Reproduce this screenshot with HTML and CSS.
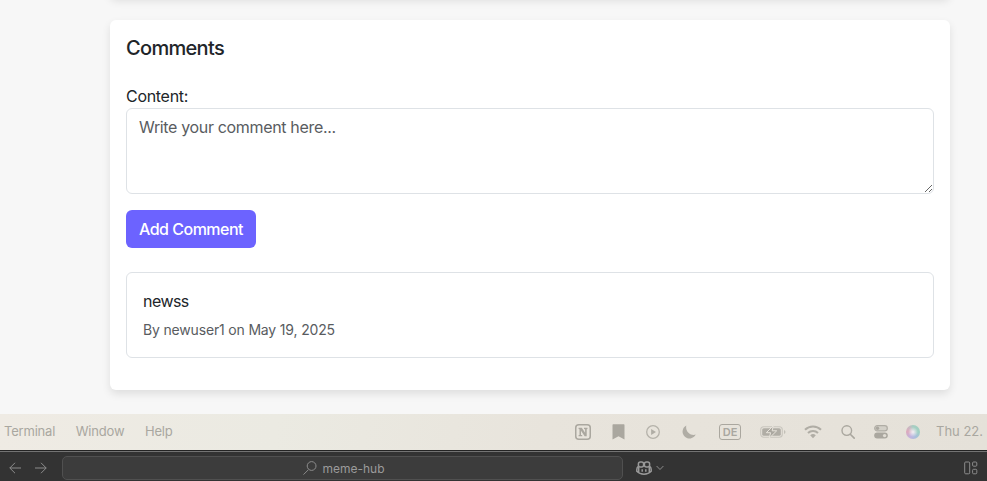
FILE: index.html
```html
<!DOCTYPE html>
<html lang="en">
<head>
<meta charset="utf-8">
<title>Comments</title>
<link rel="stylesheet" href="styles.css">
</head>
<body>
<main class="page">
  <section class="card previous"></section>
  <section class="card comments">
    <h2 class="title">Comments</h2>
    <form class="form">
      <label class="label" for="content">Content:</label>
      <textarea class="field" id="content" placeholder="Write your comment here..."></textarea>
      <button class="submit" type="button"><span>Add Comment</span></button>
    </form>
    <article class="comment">
      <p class="text"><span>newss</span></p>
      <p class="meta"><span>By newuser1 on May 19, 2025</span></p>
    </article>
  </section>
</main>
<div class="menubar">
  <nav class="menus"><span>Terminal</span><span>Window</span><span>Help</span></nav>
  <div class="status">
    <svg width="16" height="16" viewBox="0 0 16 16"><rect x=".75" y=".75" width="14.5" height="14.5" rx="3" fill="none" stroke="#aaa79f" stroke-width="1.5"/><path d="M3.6 3.8h3.2l3.3 4.9V5.200L9 4.900V3.800h3.500v1.100l-.8.300V12.200H9.700L6 6.800v4.100l1.200.2v1.100H3.600v-1.100l.9-.2V5.200L3.600 4.900z" fill="#aaa79f"/></svg>
    <svg class="bookmark" width="13" height="16" viewBox="0 0 13 16"><path d="M.5 1Q.5.300 1.200.300h10.600q.7 0 .7.700v14.500l-6-3.200-6 3.200z" fill="#aaa79f"/></svg>
    <svg class="play" width="14" height="14" viewBox="0 0 14 14"><circle cx="7" cy="7" r="6.3" fill="none" stroke="#b5b2aa" stroke-width="1.3"/><path d="M5.100 4.100v5.800L10 7z" fill="#b0ada5"/></svg>
    <svg class="moon" width="14" height="14" viewBox="0 0 14 14"><path d="M4.300.5A6.900 6.900 0 1 0 13.700 9.600C9 11.200 3 6.800 4.300.5z" fill="#b0ada5"/></svg>
    <span class="lang">DE</span>
    <svg class="battery" width="26" height="14" viewBox="0 0 26 14"><rect x=".7" y="1.700" width="21.600" height="10.600" rx="3" fill="none" stroke="#c9c6be" stroke-width="1.100"/><rect x="2.200" y="3.200" width="18.600" height="7.600" rx="1.600" fill="#b0ada5"/><path d="M24 5v4q1.500-.4 1.500-2T24 5z" fill="#c3c0b8"/><path d="M13.200.8 6.300 7.700h4.300L9.200 13.200l7.500-7.400h-4.500z" fill="#aaa79f" stroke="#e7e3db" stroke-width="1"/></svg>
    <svg class="wifi" width="18" height="14" viewBox="0 0 18 14"><g fill="none" stroke="#b0ada5" stroke-width="2"><path d="M1 4.800a11.400 11.400 0 0 1 16 0"/><path d="M4 8a7.100 7.100 0 0 1 10 0"/></g><path d="M6.200 10.300a4.200 4.200 0 0 1 5.600 0L9 13.200z" fill="#b0ada5"/></svg>
    <svg class="find" width="14" height="14" viewBox="0 0 14 14"><circle cx="5.800" cy="5.600" r="4.800" fill="none" stroke="#aaa79f" stroke-width="1.400"/><path d="m9.300 9.200 3.900 3.900" stroke="#aaa79f" stroke-width="1.600" stroke-linecap="round"/></svg>
    <svg class="control" width="14" height="14" viewBox="0 0 14 14"><rect x=".7" y=".7" width="12.600" height="5.200" rx="2.600" fill="#d3d0c8" stroke="#b0ada5" stroke-width="1.200"/><circle cx="3.500" cy="3.300" r="1.700" fill="#aaa79f"/><rect x=".2" y="7.600" width="13.600" height="6" rx="3" fill="#aaa79f"/><circle cx="10.600" cy="10.600" r="1.700" fill="#e0dcd4"/></svg>
    <span class="orb"></span>
    <span class="clock">Thu 22.</span>
  </div>
</div>
<div class="editor">
  <svg class="arrow" width="12" height="12" viewBox="0 0 12 12"><path d="M12 6H.8M6 .8.8 6 6 11.2"/></svg>
  <svg class="arrow next" width="12" height="12" viewBox="0 0 12 12"><path d="M0 6h11.200M6 .8 11.200 6 6 11.200"/></svg>
  <div class="command">
    <svg width="14" height="14" viewBox="0 0 14 14"><path d="M5.500 8.600.5 13.600"/><circle cx="8.600" cy="5" r="4.400"/></svg>
    <span class="project">meme-hub</span>
  </div>
  <svg class="copilot" width="16" height="14" viewBox="0 0 16 14"><rect x="2.400" y=".9" width="5.200" height="5.200" rx="2"/><rect x="8.400" y=".9" width="5.200" height="5.200" rx="2"/><path d="M2.500 5.200C1.200 6 .8 7 .8 8.600v1.700C2.400 12 5 13.200 8 13.200s5.600-1.200 7.200-2.900V8.600c0-1.600-.4-2.600-1.700-3.400M2.700 6v5.500M13.300 6v5.500"/><path d="M6.200 8.300v2.500M9.800 8.300v2.500"/></svg>
  <svg class="chevron" width="8" height="6" viewBox="0 0 8 6"><path d="m.6 1 3.400 3.500L7.400 1"/></svg>
  <svg class="layout" width="14" height="14" viewBox="0 0 14 14"><rect x=".7" y="1" width="5" height="11.800" rx="1"/><rect x="8.600" y="1" width="4.200" height="4.200" rx="1"/><rect x="8.600" y="8.300" width="4.200" height="4.500" rx="1"/></svg>
</div>
</body>
</html>
```
FILE: styles.css
```css
* { box-sizing: border-box; }
body {
  margin: 0;
  height: 481px;
  overflow: hidden;
  background: #f7f7f7;
  color: #212529;
  font: 16px/24px Inter, "Liberation Sans", sans-serif;
}
.page {
  height: 414px;
  padding: 0 37px 0 110px;
  overflow: hidden;
}
.card {
  background: #fff;
  border-radius: 6px;
  box-shadow: 0 4px 8px rgba(0, 0, 0, .1);
}
.previous { height: 20px; margin-top: -23px; }
.comments { height: 370px; margin-top: 23px; padding: 16px; }
.title { margin: 0 0 24px; font-size: 20px; line-height: 24px; font-weight: 500; letter-spacing: -.68px; }
.label { display: block; letter-spacing: -.3px; }
.form { margin: 0 0 24px; }
.field {
  display: block;
  width: 100%;
  height: 86px;
  margin: 0 0 16px;
  padding: 6px 12px;
  border: 1px solid #dee2e6;
  border-radius: 6px;
  background: #fff;
  font: inherit;
  letter-spacing: -.34px;
  resize: vertical;
}
.field::placeholder { color: #595c5f; opacity: 1; }
.submit {
  display: block;
  width: 130px;
  height: 38px;
  padding: 0;
  border: 0;
  border-radius: 6px;
  background: #6c63ff;
  color: #fff;
  font: inherit;
  font-weight: 500;
  letter-spacing: -.5px;
}
.comment { height: 86px; padding: 16px; border: 1px solid #dee2e6; border-radius: 6px; }
.comment p { margin: 0; }
.text { letter-spacing: -.55px; }
.comment .meta { margin-top: 6px; font-size: 14px; line-height: 21px; color: #595c5f; letter-spacing: -.17px; }
.menubar {
  display: flex;
  justify-content: space-between;
  height: 36px;
  padding: 0 4px;
  background: linear-gradient(100deg, #efebe4, #ebeae2 28%, #e8e4dc 55%, #e5e1d9);
  color: #a9a7a0;
  font-size: 13px;
  line-height: 35px;
}
.menus { display: flex; gap: 20.6px; letter-spacing: -.2px; }
.status { display: flex; align-items: center; white-space: nowrap; }
.bookmark { margin-left: 21px; }
.play { margin-left: 21px; }
.moon { margin-left: 22px; }
.lang {
  width: 22px;
  height: 16px;
  margin-left: 23px;
  border: 1.4px solid #aaa79f;
  border-radius: 3px;
  font-size: 11px;
  line-height: 14px;
  font-weight: 600;
  text-align: center;
}
.battery { margin-left: 19px; }
.wifi { margin-left: 18px; }
.find { margin-left: 19px; }
.control { margin-left: 19px; }
.orb {
  width: 14px;
  height: 14px;
  margin-left: 18px;
  border-radius: 50%;
  background: radial-gradient(circle, #eeeaf0 5%, transparent 50%), conic-gradient(#a7cec2, #9ed0c2 25%, #a9bfdc 42%, #c2b4df 58%, #dda9bd 76%, #c9b9c2 90%, #a7cec2);
}
.clock { width: 47px; margin-left: 16px; line-height: 33px; padding-bottom: 1px; }
.editor {
  display: flex;
  align-items: center;
  height: 31px;
  padding: 4px 9px 0;
  border-top: 1px solid #242424;
  background: #333;
  box-shadow: inset 0 1px #737373;
}
.editor svg { flex: none; fill: none; stroke: #8c8c8c; stroke-width: 1; }
.next { margin-left: 14px; }
.command {
  display: flex;
  align-items: center;
  justify-content: center;
  gap: 5px;
  width: 561px;
  height: 24px;
  margin-left: 15px;
  padding-left: 3px;
  border: 1px solid #505050;
  border-radius: 5px;
  background: #3c3c3c;
  color: #9b9b9b;
  font-size: 12px;
}
.project { padding-top: 1px; }
.editor .copilot { margin-left: 13px; stroke: #999; stroke-width: 1.5; }
.chevron { margin-left: 4px; }
.layout { margin-left: auto; }
```
